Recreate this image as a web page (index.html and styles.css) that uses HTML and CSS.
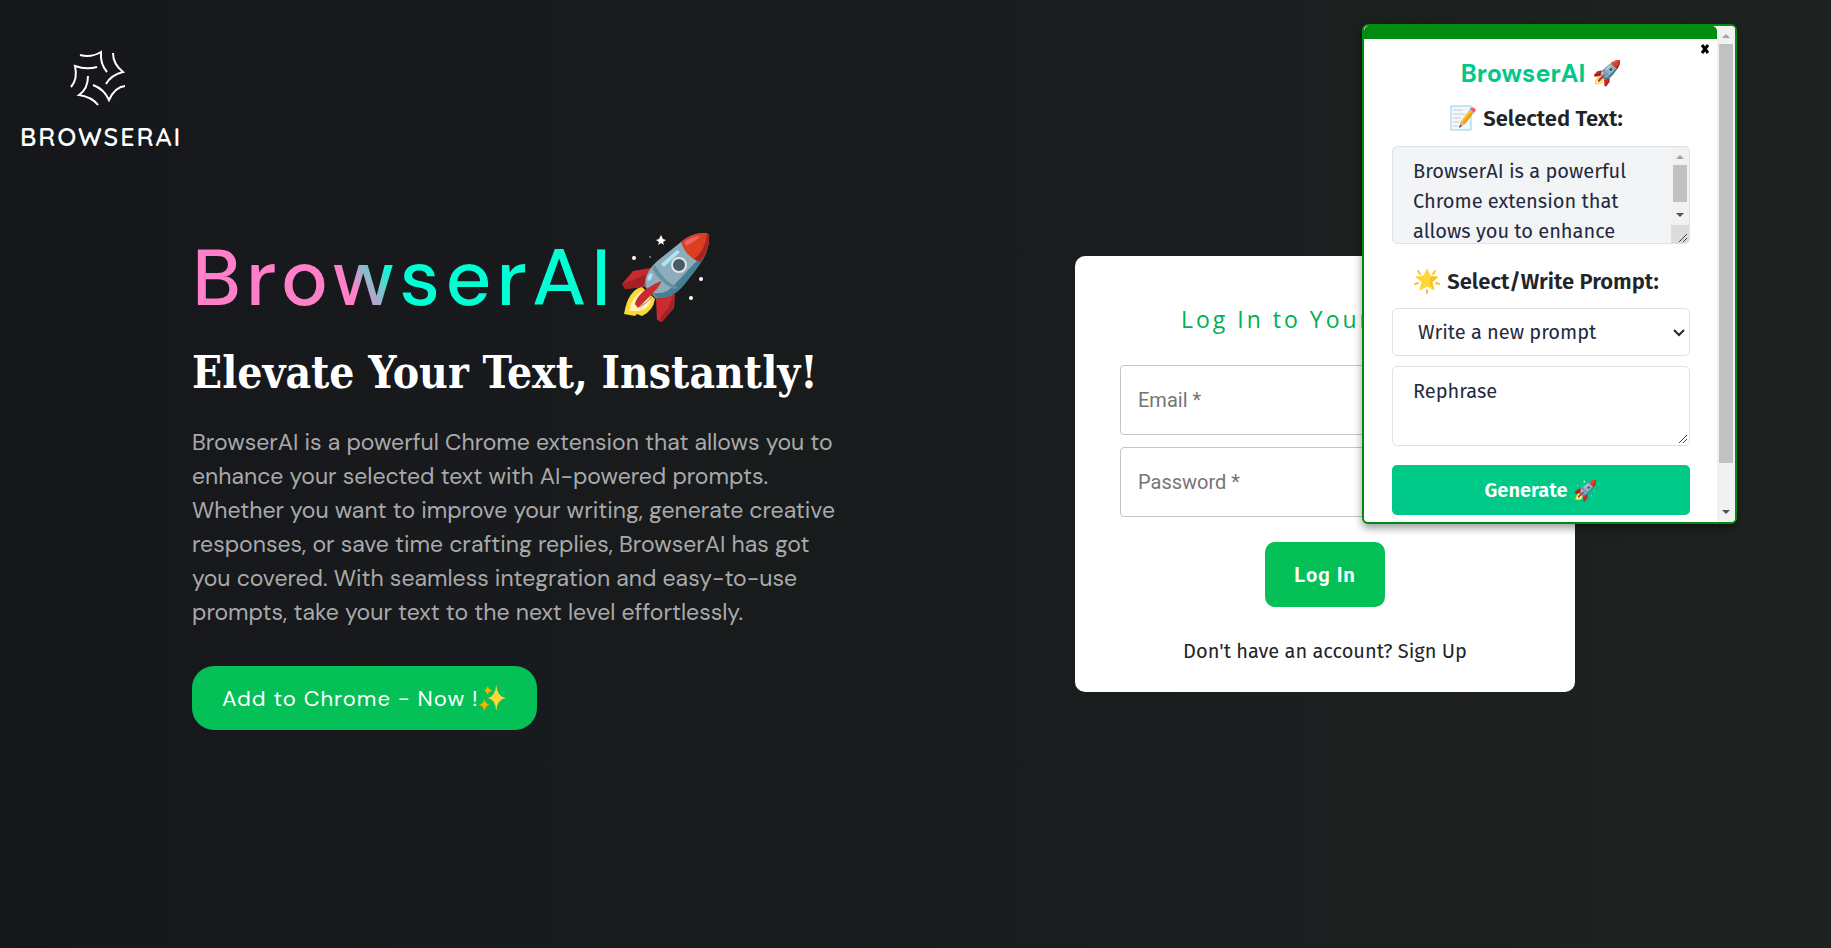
FILE: index.html
```html
<!DOCTYPE html>
<html lang="en">
<head>
<meta charset="utf-8">
<title>BrowserAI</title>
<link rel="stylesheet" href="styles.css">
</head>
<body>
<svg class="sprites" aria-hidden="true">
  <symbol id="rocket" viewBox="0 0 110 110">
    <path d="M12 64 23 51 41 48 34 67 15 69z" fill="#c62a31"/>
    <path d="M13 64 37 54 33 67 15 69z" fill="#a32024"/>
    <path d="M46 79 65 74 64 88 52 102 47 100z" fill="#cb2a31"/>
    <path d="M64 74 63 88 52 102 50 98 59 87z" fill="#a32024"/>
    <path d="M32 67 45 79Q43 91 32 96L27 94 25 96 14 94Q18 70 32 67z" fill="#fdd835"/>
    <path d="M32 71 41 80Q39 90 29 91L19 91Q22 76 32 71z" fill="#fff3b0"/>
    <path d="M34 66 46 79 52 77 36 60z" fill="#78797c"/>
    <path d="M99 14Q100 30 90 42L70 68Q60 80 47 77 33 70 36 57 40 46 51 38L71 22Q84 11 99 14z" fill="#8dacbc"/>
    <path d="M97 30Q96 38 78 60 63 81 47 77L42 73Q58 75 66 63z" fill="#467f91"/>
    <path d="M42 48Q49 62 64 69L69 68Q53 61 45 45z" fill="#6690a0"/>
    <path d="M71 22Q84 11 99 14 100 30 90 42 76 37 71 22z" fill="#da3f22"/>
    <path d="M99 14Q100 30 90 42L84 39Q95 31 97 14z" fill="#a42521"/>
    <path d="M74 22Q82 16 90 16 89 19 76 26z" fill="#ef6262"/>
    <path d="M51 44 67 30 70 32 54 47z" fill="#afe3f1"/>
    <ellipse cx="40" cy="57" rx="2" ry="4" transform="rotate(25 40 57)" fill="#afe3f1"/>
    <circle cx="69" cy="45" r="7" fill="#425c69" stroke="#e5e5e3" stroke-width="2"/>
    <path d="M25 84Q28 71 51 61 52 65 28 88z" fill="#cb2a31"/>
    <path d="M28 88Q43 81 51 61 46 77 28 88z" fill="#a32024"/>
  </symbol>
  <symbol id="rocket-stars" viewBox="0 0 110 110">
    <path d="M51 15 53 19 56 20 53 22 54 25 51 23 48 25 49 22 46 20 49 19z" fill="#fff"/>
    <circle cx="24" cy="38" r="2" fill="#fff"/><circle cx="40" cy="37" r="1" fill="#888"/>
    <circle cx="91" cy="59" r="2" fill="#fff"/><circle cx="81" cy="78" r="2" fill="#fff"/>
  </symbol>
  <symbol id="scroll-up" viewBox="0 0 18 18"><path d="M5 12 9 8 13 12z" fill="#a3a3a3"/></symbol>
  <symbol id="scroll-down" viewBox="0 0 18 18"><path d="M5 6 9 10 13 6z" fill="#505050"/></symbol>
  <symbol id="grip" viewBox="0 0 10 10"><path d="M1 9 9 1M5 9 9 5" stroke="#444" stroke-width="1" fill="none"/></symbol>
</svg>

<header class="site-header">
  <a class="logo" href="#">
    <svg class="logo-mark" viewBox="0 0 56 56" aria-hidden="true">
      <path d="M10 5Q21 8 31 2Q30 14 37 22M43 3Q43 14 53 22Q41 25 36 34M55 36Q45 37 39 50Q34 39 23 35M18 26Q18 39 9 45Q22 47 28 55M1 37Q8 29 5 16Q16 20 27 17" fill="none" stroke="#fff" stroke-width="2"/>
    </svg>
    <span class="logo-name">BROWSERAI</span>
  </a>
</header>

<main class="page">
  <section class="hero">
    <h1 class="hero-title"><span class="hero-name">BrowserAI</span><svg class="hero-rocket" viewBox="0 0 110 110" role="img" aria-label="rocket"><use href="#rocket"/><use href="#rocket-stars"/></svg></h1>
    <h2 class="hero-tagline">Elevate Your Text, Instantly!</h2>
    <p class="hero-text">BrowserAI is a powerful Chrome extension that allows you to<br>enhance your selected text with AI-powered prompts.<br>Whether you want to improve your writing, generate creative<br>responses, or save time crafting replies, BrowserAI has got<br>you covered. With seamless integration and easy-to-use<br>prompts, take your text to the next level effortlessly.</p>
    <button class="cta" type="button">Add to Chrome - Now !<svg class="cta-icon" viewBox="0 0 26 26" aria-hidden="true"><path d="M16 1Q17 12 25 13 17 14 16 25 15 14 8 13 15 12 16 1z" fill="#fdd835"/><path d="M5 14Q6 19 10 19 6 20 5 25 4 20 0 19 4 19 5 14zM8 2Q9 5 12 6 9 7 8 10 7 7 5 6 7 5 8 2z" fill="#f4b400"/></svg></button>
  </section>

  <form class="login">
    <h2 class="login-title">Log In to Your Account</h2>
    <div class="login-fields">
      <input class="login-input" type="email" placeholder="Email *" aria-label="Email" required>
      <input class="login-input" type="password" placeholder="Password *" aria-label="Password" required>
    </div>
    <button class="login-button" type="submit">Log In</button>
    <a class="login-link" href="#">Don't have an account? Sign Up</a>
  </form>
</main>

<aside class="popup">
  <div class="popup-main">
    <div class="popup-bar"></div>
    <button class="popup-close" type="button" aria-label="Close"><svg viewBox="0 0 10 10" aria-hidden="true"><path d="M2 1 8 9M8 1 2 9" stroke="#000" stroke-width="3"/></svg></button>
    <div class="popup-body">
      <h2 class="popup-title">BrowserAI <svg class="popup-rocket" viewBox="10 10 92 94" aria-hidden="true"><use href="#rocket" width="110" height="110"/></svg></h2>
      <h3 class="popup-heading"><svg class="popup-emoji" viewBox="0 0 26 26" aria-hidden="true"><path d="M1 1H21V25H1z" fill="#f5f8fa" stroke="#8fcdf2"/><path d="M3 5H13M3 9H15M3 13H11M3 17H9M3 21H8" stroke="#c4c8cc"/><path d="M9 22 11 16 21 3 25 6 15 19z" fill="#fbc02d"/><path d="M13 17 23 5 25 6 15 19z" fill="#ef9a1a"/><path d="M9 23 11 16 15 19z" fill="#d9b48a"/><path d="M9 23 10 20 12 21z" fill="#444"/><path d="M20 4Q23 0 26 5L24 8z" fill="#ef5a70"/><path d="M19 5 23 9 24 8 20 4z" fill="#b0bec5"/></svg>Selected Text:</h3>
      <div class="field field-selected">
        <textarea class="field-text" aria-label="Selected text" rows="3">BrowserAI is a powerful
Chrome extension that
allows you to enhance
your selected text</textarea>
        <div class="scroll" aria-hidden="true">
          <svg class="scroll-arrow"><use href="#scroll-up"/></svg>
          <div class="scroll-track"><div class="scroll-thumb scroll-thumb-text"></div></div>
          <svg class="scroll-arrow"><use href="#scroll-down"/></svg>
          <div class="scroll-corner"><svg class="grip"><use href="#grip"/></svg></div>
        </div>
      </div>
      <h3 class="popup-heading popup-heading-prompt"><svg class="popup-emoji" viewBox="0 0 26 26" aria-hidden="true"><path d="M13 22V25M1 16 4 15M25 16 22 15M4 3 6 6M21 3 19 6" stroke="#fbc02d" stroke-width="2" stroke-linecap="round"/><path d="M13 1 16 8 24 9 18 14 20 22 13 18 6 22 8 14 2 9 10 8z" fill="#fdd835" stroke="#fdd835" stroke-width="1" stroke-linejoin="round"/><path d="M16 9 24 9 18 14 20 22 16 17z" fill="#f9c22b"/></svg>Select/Write Prompt:</h3>
      <div class="select-wrap">
        <select class="prompt-select" aria-label="Prompt"><option>Write a new prompt</option></select>
        <svg class="select-arrow" viewBox="0 0 12 8" aria-hidden="true"><path d="M1 1 6 6 11 1" fill="none" stroke="#1f2937" stroke-width="2"/></svg>
      </div>
      <div class="field field-prompt">
        <textarea class="field-text" aria-label="New prompt" rows="2">Rephrase</textarea>
        <svg class="grip grip-prompt" aria-hidden="true"><use href="#grip"/></svg>
      </div>
      <button class="generate" type="button">Generate <svg class="generate-rocket" viewBox="10 10 92 94" aria-hidden="true"><use href="#rocket" width="110" height="110"/><use href="#rocket-stars" width="110" height="110"/></svg></button>
    </div>
  </div>
  <div class="scroll" aria-hidden="true">
    <svg class="scroll-arrow"><use href="#scroll-up"/></svg>
    <div class="scroll-track"><div class="scroll-thumb scroll-thumb-popup"></div></div>
    <svg class="scroll-arrow"><use href="#scroll-down"/></svg>
  </div>
</aside>
</body>
</html>
```
FILE: styles.css
```css
* { box-sizing: border-box; }
body {
  margin: 0;
  min-height: 100vh;
  background: linear-gradient(to right, #16171b, #191c1d 50%, #1e2220);
  font-family: "Fira Sans", "Noto Sans", sans-serif;
  overflow: hidden;
}
h1, h2, h3, p { margin: 0; }
button, input, select, textarea { font: inherit; border: 0; }
.sprites { display: none; }

.site-header { display: flex; padding: 50px 20px 0; }
.logo { display: flex; flex-direction: column; align-items: center; gap: 15px; color: #fff; text-decoration: none; }
.logo-mark { width: 56px; height: 56px; margin-right: 6px; }
.logo-name { font: 600 25px/32px Quicksand, Montserrat, "DM Sans", Lato, sans-serif; letter-spacing: 2px; }

.page { display: flex; justify-content: space-between; align-items: flex-start; padding: 68px 256px 0 192px; }
.hero { display: flex; flex-direction: column; align-items: flex-start; font-family: "DM Sans", Inter, sans-serif; }
.hero-title { display: flex; align-items: center; height: 108px; font-size: 80px; font-weight: 500; letter-spacing: 5px; }
.hero-name { padding-top: 6px; background: linear-gradient(60deg, #ff80c8 38%, #00ffd5 48%); -webkit-background-clip: text; background-clip: text; color: transparent; }
.hero-rocket { width: 110px; height: 110px; margin-left: -6px; }
.hero-tagline { margin-top: 14px; font: bold 44px/60px "Roboto Slab", "DejaVu Serif Condensed", "DejaVu Serif", serif; color: #fff; white-space: nowrap; }
.hero-text { margin-top: 22px; font-size: 23px; line-height: 34px; color: #a9a9aa; white-space: nowrap; }
.cta { display: flex; align-items: center; margin-top: 37px; height: 64px; padding: 0 30px; border-radius: 22px; background: #04c057; color: #fff; font-size: 22px; letter-spacing: 1px; }
.cta-icon { width: 28px; height: 28px; }

.login { flex: none; width: 500px; margin-top: 35px; padding: 45px 45px 25px; display: flex; flex-direction: column; align-items: center; border-radius: 10px; background: #fff; }
.login-title { align-self: stretch; padding-left: 61px; font: 400 23px/36px "Open Sans", sans-serif; letter-spacing: 3px; color: #00b050; white-space: nowrap; }
.login-fields { align-self: stretch; display: flex; flex-direction: column; gap: 12px; margin-top: 28px; }
.login-input { width: 100%; height: 70px; padding: 0 17px; border: 1px solid #c4c4c4; border-radius: 4px; background: #fff; font: 20px Roboto, sans-serif; }
.login-input::placeholder { color: #757575; }
.login-button { margin-top: 25px; height: 65px; padding: 0 29px; border-radius: 10px; background: #04c057; color: #fff; font: bold 20px Roboto, sans-serif; letter-spacing: 1px; }
.login-link { margin-top: 28px; font-size: 20px; line-height: 32px; color: #212529; text-decoration: none; }

.popup { position: absolute; top: 24px; right: 94px; width: 375px; height: 500px; display: flex; overflow: hidden; border: 2px solid #008c10; border-radius: 6px; background: #fff; box-shadow: 0 4px 8px rgba(0, 0, 0, .4); }
.popup-main { position: relative; flex: 1; }
.popup-bar { height: 13px; border-radius: 5px 5px 0 0; background: #008c10; }
.popup-close { position: absolute; top: 18px; right: 7px; width: 10px; height: 10px; padding: 0; background: none; }
.popup-close svg { display: block; width: 10px; height: 10px; }
.popup-body { padding: 17px 27px 0 28px; display: flex; flex-direction: column; }
.popup-title, .popup-heading { display: flex; align-items: center; justify-content: center; white-space: nowrap; }
.popup-title { gap: 8px; height: 34px; font: bold 25px "DM Sans", Inter, sans-serif; color: #00c988; }
.popup-rocket { width: 28px; height: 28px; }
.popup-heading { gap: 7px; height: 30px; margin-top: 13px; padding-right: 9px; font-size: 22px; font-weight: 600; color: #212529; }
.popup-heading-prompt { margin-top: 22px; }
.popup-emoji { width: 26px; height: 26px; }
.field { position: relative; display: flex; overflow: hidden; border: 1px solid #dee2e6; border-radius: 5px; color: #1f2a40; }
.field-selected { height: 98px; margin-top: 13px; background: #f3f4f6; }
.field-prompt { height: 80px; margin-top: 10px; }
.field-text { flex: 1; min-width: 0; padding: 9px 0 0 20px; resize: none; overflow: hidden; background: none; color: inherit; font-size: 20px; line-height: 30px; outline: 0; white-space: pre; }
.scroll { flex: none; width: 18px; display: flex; flex-direction: column; background: #f1f1f1; }
.scroll-arrow { width: 18px; height: 18px; }
.scroll-track { flex: 1; padding: 0 2px; }
.scroll-thumb { background: #c1c1c1; }
.scroll-thumb-text { height: 37px; }
.scroll-thumb-popup { height: 91%; }
.scroll-corner { height: 18px; padding: 8px 0 0 7px; background: #dcdcdc; }
.grip { display: block; width: 10px; height: 10px; }
.grip-prompt { position: absolute; right: 1px; bottom: 1px; }
.select-wrap { position: relative; margin-top: 12px; }
.prompt-select { display: block; width: 100%; height: 48px; padding: 0 25px; appearance: none; border: 1px solid #dee2e6; border-radius: 5px; background: #fff; color: #1f2a40; font-size: 20px; }
.select-arrow { position: absolute; top: 21px; right: 5px; width: 12px; height: 8px; }
.generate { display: flex; align-items: center; justify-content: center; gap: 7px; height: 50px; margin-top: 19px; border-radius: 5px; background: #00c988; color: #fff; font-size: 20px; font-weight: 600; }
.generate-rocket { width: 23px; height: 23px; }
```
